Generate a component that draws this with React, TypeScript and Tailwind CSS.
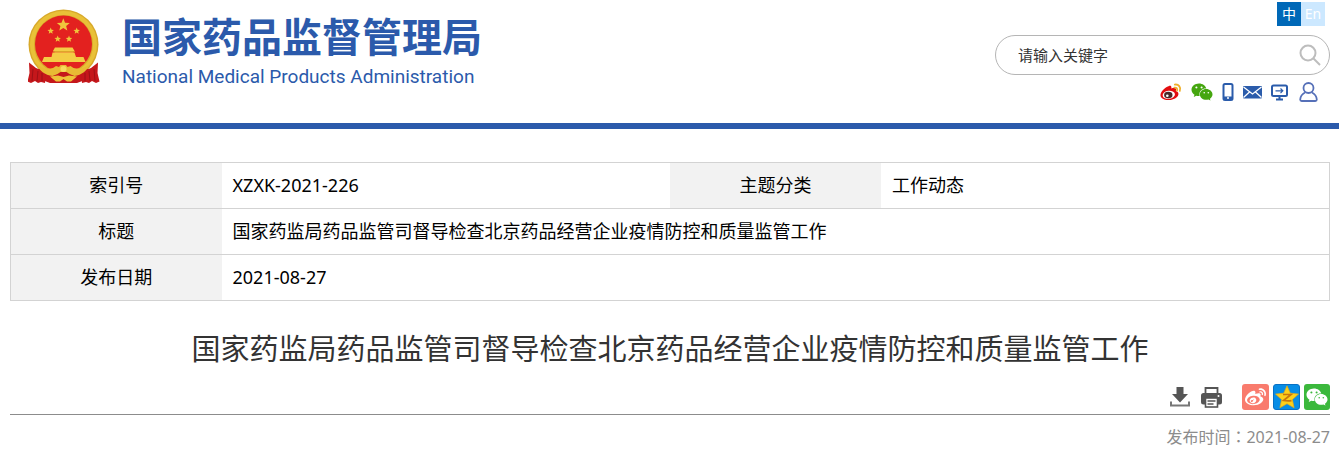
import type { ReactNode } from "react";
import { FaWeibo, FaWeixin } from "react-icons/fa";

const TITLE = "国家药监局药品监管司督导检查北京药品经营企业疫情防控和质量监管工作";

const Star = ({ x, y, r }: { x: number; y: number; r: number }) => (
  <path
    transform={`translate(${x} ${y}) scale(${r})`}
    fill="#f0c63c"
    d="M0-1 .26-.34.95-.31.42.14.59.81 0 .43-.59.81-.42.14-.95-.31-.26-.34Z"
  />
);

const Emblem = () => (
  <svg viewBox="0 0 72 76" className="h-[76px] w-[72px] shrink-0" aria-hidden="true">
    <circle cx="35.500" cy="35.500" r="35" fill="#d8a92a" />
    <circle cx="35.500" cy="35.500" r="31.500" fill="none" stroke="#e9c138" strokeWidth="4" />
    <circle cx="35.500" cy="35" r="28.500" fill="#e3211f" />
    <Star x={35.300} y={16} r={6.800} />
    <Star x={22.700} y={22} r={3.400} />
    <Star x={48.700} y={22} r={3.400} />
    <Star x={29.700} y={30} r={3.400} />
    <Star x={41} y={30} r={3.400} />
    <g fill="#f4cd45">
      <path d="M27 38.500h17.500l2 3.500H25Z" />
      <path d="M26.500 42h19v1.500h-19Z" />
      <path d="M24.500 43.500h22l1.500 4.500H23.500Z" />
      <path d="M16 48h39.500l2 5H14Z" />
    </g>
    <path d="M25 42.500h22" stroke="#d89a24" strokeWidth=".8" />
    {/* ribbon */}
    <path d="M10 60h51l-4 11-8 3H22l-8-3Z" fill="#c5171b" />
    <path d="M1 53.500l7 5.500 10 4-1 11-4-1-3 1-3-2-4 2-3.500-1.500L1.500 64Z" fill="#c5171b" />
    <path d="M70 53.500 63 59l-10 4 1 11 4-1 3 1 3-2 4 2 3.500-1.500L69.500 64Z" fill="#c5171b" />
    <path d="M5 60 4 72M10 62l-1 10M14 64v8M66 60l1 12M61 62l1 10M57 64v8" stroke="#930f14" strokeWidth=".8" />
    <path
      d="M9 55c5 5 10 5 16 4l3-2 3 1 1.500-2h5.500l1.500 2 3-1 3 2c6 1 11 1 16-4-2 7-8 11-15 12l-5-2-3-2h-6l-3 2-5 2C17 66 11 62 9 55Z"
      fill="#e8bb34"
    />
    <circle cx="35.500" cy="60" r="3" fill="#f7dc5e" />
    <path d="M22 67.500l8-1 5.500 1.500 5.500-1.500 8 1-6 5h-4l-3.500-2.500L32 72.500h-4Z" fill="#edc238" />
  </svg>
);

const BlueIcon = ({ className, children }: { className: string; children: ReactNode }) => (
  <svg className={className} fill="none" stroke="#2b5cab" strokeWidth="2" aria-hidden="true">
    {children}
  </svg>
);

const WeiboColor = () => (
  <svg viewBox="0 0 22 18" className="h-[18px] w-[22px]" aria-hidden="true">
    <path
      fill="#e30d10"
      d="M8.500 3.200c2.500-1 3.200.2 2.800 2.200 2.400-1 5.400-1 4.600 2-.1.600 0 .7.500.9 2.500.8 2.800 3.700.3 6-3.500 3.400-12 3.900-15.200.5C-.8 12.400 1 9 3.500 6.600c1.500-1.500 3.200-2.800 5-3.400Z"
    />
    <ellipse cx="8.800" cy="11.800" rx="6.200" ry="4" transform="rotate(-8 8.800 11.800)" fill="#fff" />
    <ellipse cx="8.300" cy="12" rx="4.200" ry="3.300" fill="#4a2929" />
    <circle cx="7.300" cy="12.800" r="1.300" fill="#fff" />
    <path d="M14.800 1.600c3.800-.6 6.400 2.600 5 6.300M14.500 4.600c1.900-.3 3.100 1 2.600 2.900" fill="none" stroke="#efb02c" strokeWidth="1.800" strokeLinecap="round" />
  </svg>
);

const Header = () => (
  <header className="flex h-[129px] justify-between border-b-6 border-[#2b5aab] pr-[9px] pl-7">
    <a href="#" className="flex items-start gap-[22px] pt-[9px] text-[#2b5aab]">
      <Emblem />
      <span className="flex flex-col">
        <span className="text-[40px] leading-[56px] font-bold">国家药品监督管理局</span>
        <span className="font-['Roboto',sans-serif] text-[19px] leading-6">National Medical Products Administration</span>
      </span>
    </a>

    <div className="flex w-[335px] flex-col">
      <div className="flex justify-end pt-0.5 pr-[5px] text-[14px] leading-6 text-white">
        <a href="#" className="w-6 bg-[#0068b7] text-center">中</a>
        <a href="#" className="w-6 bg-[#cce8ff] text-center">En</a>
      </div>
      <form className="mt-[9px] flex h-10 items-center rounded-full border border-[#b5b5b5] pr-[7px] pl-[22px]">
        <input
          type="text"
          aria-label="请输入关键字"
          placeholder="请输入关键字"
          className="min-w-0 flex-1 text-[15px] leading-5 text-[#333] outline-none placeholder:text-[#333]"
        />
        <button type="button" aria-label="搜索">
          <svg viewBox="0 0 24 24" className="size-6" fill="none" stroke="#bdbdbd" strokeWidth="2">
            <circle cx="10" cy="10" r="7.500" />
            <path d="M15.500 15.500 22 22" />
          </svg>
        </button>
      </form>
      <nav className="mt-1.5 flex items-center justify-end pr-3">
        <a href="#" aria-label="微博"><WeiboColor /></a>
        <a href="#" aria-label="微信" className="ml-[9px]"><FaWeixin className="size-[22px] text-[#45a60f]" /></a>
        <a href="#" aria-label="手机版" className="ml-[9px]">
          <BlueIcon className="h-[18px] w-[12px]">
            <rect x="1.500" y="1" width="9" height="16" rx="1.500" />
            <path d="M1.500 15h9" strokeWidth="3" />
            <circle cx="6" cy="15" r="1" fill="#fff" stroke="none" />
          </BlueIcon>
        </a>
        <a href="#" aria-label="邮箱" className="ml-[9px]">
          <BlueIcon className="h-[14px] w-[19px]">
            <rect x="0" y="1" width="19" height="12.500" rx="1" fill="#2b5cab" stroke="none" />
            <path d="M.5 2 9.500 9l9-7M.5 12.500 6.500 7M18.500 12.500 12.500 7" stroke="#fff" strokeWidth="1.300" />
          </BlueIcon>
        </a>
        <a href="#" aria-label="电脑版" className="ml-[9px]">
          <BlueIcon className="h-[17px] w-[17px]">
            <rect x="1" y="1.500" width="15" height="10.500" rx="1.500" />
            <path d="M8.500 12v3.500M5 15.500h7" />
            <path d="M4.500 6.800h7M9.500 4.500l2.300 2.300-2.300 2.300" strokeWidth="1.200" />
          </BlueIcon>
        </a>
        <a href="#" aria-label="个人中心" className="ml-[11px]">
          <BlueIcon className="h-5 w-[19px]">
            <g stroke="#5670b8" strokeWidth="1.800">
              <circle cx="9.500" cy="6" r="5" />
              <path d="M6 10.500C3 12 1.500 14 1.200 17.500c0 1 .5 1.500 1.500 1.500h13.600c1 0 1.500-.5 1.500-1.500-.3-3.500-1.800-5.500-4.800-7" />
            </g>
          </BlueIcon>
        </a>
      </nav>
    </div>
  </header>
);

const labelCell = "bg-[#f2f2f2] text-center font-normal";
const valueCell = "pl-[11px]";

const InfoTable = () => (
  <table className="w-full table-fixed border-collapse border border-[#d3d3d3] text-[18px] leading-[45px] text-black">
    <colgroup>
      <col className="w-[16%]" />
      <col className="w-[34%]" />
      <col className="w-[16%]" />
      <col className="w-[34%]" />
    </colgroup>
    <tbody>
      <tr className="border-b border-[#d3d3d3]">
        <th scope="row" className={labelCell}>索引号</th>
        <td className={valueCell}>XZXK-2021-226</td>
        <th scope="row" className={labelCell}>主题分类</th>
        <td className={valueCell}>工作动态</td>
      </tr>
      <tr className="border-b border-[#d3d3d3]">
        <th scope="row" className={labelCell}>标题</th>
        <td className={valueCell} colSpan={3}>{TITLE}</td>
      </tr>
      <tr>
        <th scope="row" className={labelCell}>发布日期</th>
        <td className={valueCell} colSpan={3}>2021-08-27</td>
      </tr>
    </tbody>
  </table>
);

const Toolbar = () => (
  <div className="flex items-center justify-end border-b border-[#8c8c8c] pb-1">
    <button type="button" aria-label="下载">
      <svg viewBox="0 0 20 20" className="size-5" aria-hidden="true">
        <path d="M6.500 0h7v7H18l-8 8.500L2 7h4.500Z" fill="#555" />
        <path d="M1 14.500v4h18v-4" fill="none" stroke="#777" strokeWidth="2" />
      </svg>
    </button>
    <button type="button" aria-label="打印" className="ml-[11px]">
      <svg viewBox="0 0 21 21" className="size-[21px]" aria-hidden="true">
        <path d="M4.500 7V1h12v6" fill="#fff" stroke="#555" strokeWidth="1.800" />
        <rect y="6" width="21" height="11.500" rx="2.500" fill="#555" />
        <rect x="4.500" y="11" width="12" height="9" fill="#fff" stroke="#555" strokeWidth="1.600" />
        <path d="M6.500 14h8M6.500 17h6" stroke="#555" strokeWidth="1.300" />
        <circle cx="17.500" cy="9" r="1" fill="#fff" />
      </svg>
    </button>
    <a href="#" aria-label="分享到微博" className="ml-5 flex h-[26px] w-[27px] items-center justify-center rounded-[3px] bg-[#f97b6d]">
      <FaWeibo className="size-[21px] text-white" />
    </a>
    <a href="#" aria-label="分享到QQ空间" className="ml-1 flex h-[26px] w-[27px] items-center justify-center rounded-[3px] border border-[#0871c4] bg-[#078de6]">
      <svg viewBox="0 0 24 24" className="size-6 shrink-0" aria-hidden="true">
        <path d="M12 .8l3.300 7.400 8.200.9-6.100 5.500 1.700 8.200L12 18.700l-7.100 4.100 1.700-8.200L.5 9.100l8.200-.9Z" fill="#fcd01c" stroke="#e8a914" strokeWidth=".7" />
        <path d="M8 9.500h8l-7.500 6c3 .6 5.500.6 8 .2" fill="none" stroke="#c9760c" strokeWidth="1.700" />
      </svg>
    </a>
    <a href="#" aria-label="分享到微信" className="ml-1 flex h-[26px] w-[26px] items-center justify-center rounded-[3px] bg-[#3bb83c]">
      <FaWeixin className="size-[22px] text-white" />
    </a>
  </div>
);

export default function App() {
  return (
    <div className="bg-white font-['Noto_Sans','Noto_Sans_CJK_SC',sans-serif]">
      <Header />
      <main className="pt-[33px] pr-[9px] pb-2 pl-[10px]">
        <InfoTable />
        <h1 className="pt-7 text-center text-[29px] leading-10 font-normal text-[#333]">{TITLE}</h1>
        <div className="pt-[15px]">
          <Toolbar />
        </div>
        <p className="pt-[9px] text-right text-[16px] leading-6 text-[#8c8c8c]">
          发布时间<span className="font-['Noto_Sans_CJK_TC',sans-serif]">：</span>2021-08-27
        </p>
      </main>
    </div>
  );
}
